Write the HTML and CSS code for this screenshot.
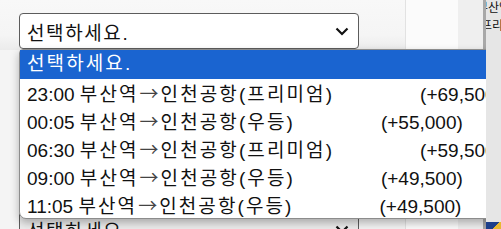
FILE: index.html
```html
<!DOCTYPE html>
<html lang="ko">

<head>
    <meta charset="UTF-8">
    <meta name="viewport" content="width=device-width, initial-scale=1.0">
    <title>예약</title>
    <link rel="stylesheet" href="styles.css">
</head>

<body>
    <div class="screen">
        <div class="form">
            <div class="row row-top">
                <div class="select">
                    <span class="ko">선택하세요.</span>
                    <svg class="chevron" width="14" height="9" viewBox="0 0 14 9"><path d="M1.5 1.5 L7 7 L12.5 1.5" fill="none" stroke="#111" stroke-width="2.2"/></svg>
                </div>
            </div>
            <div class="row-gap"></div>
            <div class="row row-bottom">
                <div class="select select-dim">
                    <span class="ko">선택하세요.</span>
                    <svg class="chevron" width="14" height="9" viewBox="0 0 14 9"><path d="M1.5 1.5 L7 7 L12.5 1.5" fill="none" stroke="#111" stroke-width="2.2"/></svg>
                </div>
            </div>

            <!-- open option list -->
            <ul class="dropdown">
                <li class="selected"><span class="ko">선택하세요.</span></li>
                <li>23:00 <span class="ko">부산역</span><span class="arrow">→</span><span class="ko">인천공항(프리미엄)</span><span class="price">(+69,500)</span></li>
                <li>00:05 <span class="ko">부산역</span><span class="arrow">→</span><span class="ko">인천공항(우등)</span><span class="price">(+55,000)</span></li>
                <li>06:30 <span class="ko">부산역</span><span class="arrow">→</span><span class="ko">인천공항(프리미엄)</span><span class="price">(+59,500)</span></li>
                <li>09:00 <span class="ko">부산역</span><span class="arrow">→</span><span class="ko">인천공항(우등)</span><span class="price">(+49,500)</span></li>
                <li>11:05 <span class="ko">부산역</span><span class="arrow">→</span><span class="ko">인천공항(우등)</span><span class="price">(+49,500)</span></li>
            </ul>
        </div>
        <div class="band-white"></div>
        <div class="band-gray"></div>
        <div class="divider"></div>
        <div class="side">
            <p>부산역</p>
            <p>(프리미</p>
            <div class="tray-icon"></div>
        </div>
    </div>
</body>

</html>
```

FILE: styles.css
```css
body {
    margin: 0;
    font-family: "Liberation Sans", "Noto Sans CJK KR", sans-serif;
    background-color: #f4f4f4;
    overflow: hidden;
}

.screen {
    display: flex;
    width: 501px;
    height: 229px;
    overflow: hidden;
}

.form {
    position: relative;
    width: 405px;
    flex-shrink: 0;
    display: flex;
    flex-direction: column;
    background-color: #f4f4f4;
}

.row {
    padding-left: 19px;
    box-sizing: border-box;
}

.row-top {
    height: 50px;
    padding-top: 13px;
    background: linear-gradient(#f8f8f8, #f5f5f5 35px, #ebebeb);
}

.row-gap {
    height: 161px;
}

.row-bottom {
    height: 18px;
}

.select {
    width: 340px;
    height: 36px;
    box-sizing: border-box;
    display: flex;
    align-items: center;
    justify-content: space-between;
    padding: 0 9px 0 7px;
    border: 1px solid #5c5c5c;
    border-radius: 4px;
    background-color: #fff;
    font-size: 19px;
    color: #111;
}

.select-dim {
    background-color: #ececec;
}

.ko {
    letter-spacing: 1.6px;
}

.dropdown .ko {
    letter-spacing: 2.1px;
}

.arrow {
    font-family: "Noto Sans CJK KR", sans-serif;
    font-size: 19px;
    color: #444;
    margin: 0 2px 0 1px;
}

.dropdown {
    position: absolute;
    left: 19px;
    top: 49px;
    width: 500px;
    margin: 0;
    padding: 0;
    list-style: none;
    background-color: #fff;
    border: 1px solid #8c8c8c;
    border-radius: 4px 0 0 7px;
    box-shadow: 0 4px 8px rgba(0, 0, 0, 0.28);
    font-size: 19px;
    color: #111;
}

.dropdown li {
    height: 28px;
    line-height: 28px;
    padding-left: 7px;
    white-space: nowrap;
}

.dropdown li.selected {
    height: 29px;
    background-color: #1a64d0;
    color: #fff;
}

.dropdown li:last-child {
    height: 27px;
}

.price {
    margin-left: 86px;
}

.band-white {
    width: 52px;
    flex-shrink: 0;
    border-left: 1px solid #e2e2e2;
    background-color: #fbfbfb;
}

.band-gray {
    width: 25px;
    flex-shrink: 0;
    background-color: #efefef;
}

.divider {
    width: 3px;
    flex-shrink: 0;
    background-color: #a8a8a8;
}

.side {
    position: relative;
    flex: 1;
    overflow: hidden;
    background-color: #e6e6e6;
    font-size: 12px;
}

.side p {
    margin: 0;
    margin-left: -9px;
    line-height: 18px;
    white-space: nowrap;
    color: #111;
}

.side p:first-child {
    margin-top: -1px;
}

.tray-icon {
    position: absolute;
    left: 0;
    top: 222px;
    width: 15px;
    height: 7px;
    background: linear-gradient(135deg, #1d3f8a 60%, #e8b830 60%);
}
```
